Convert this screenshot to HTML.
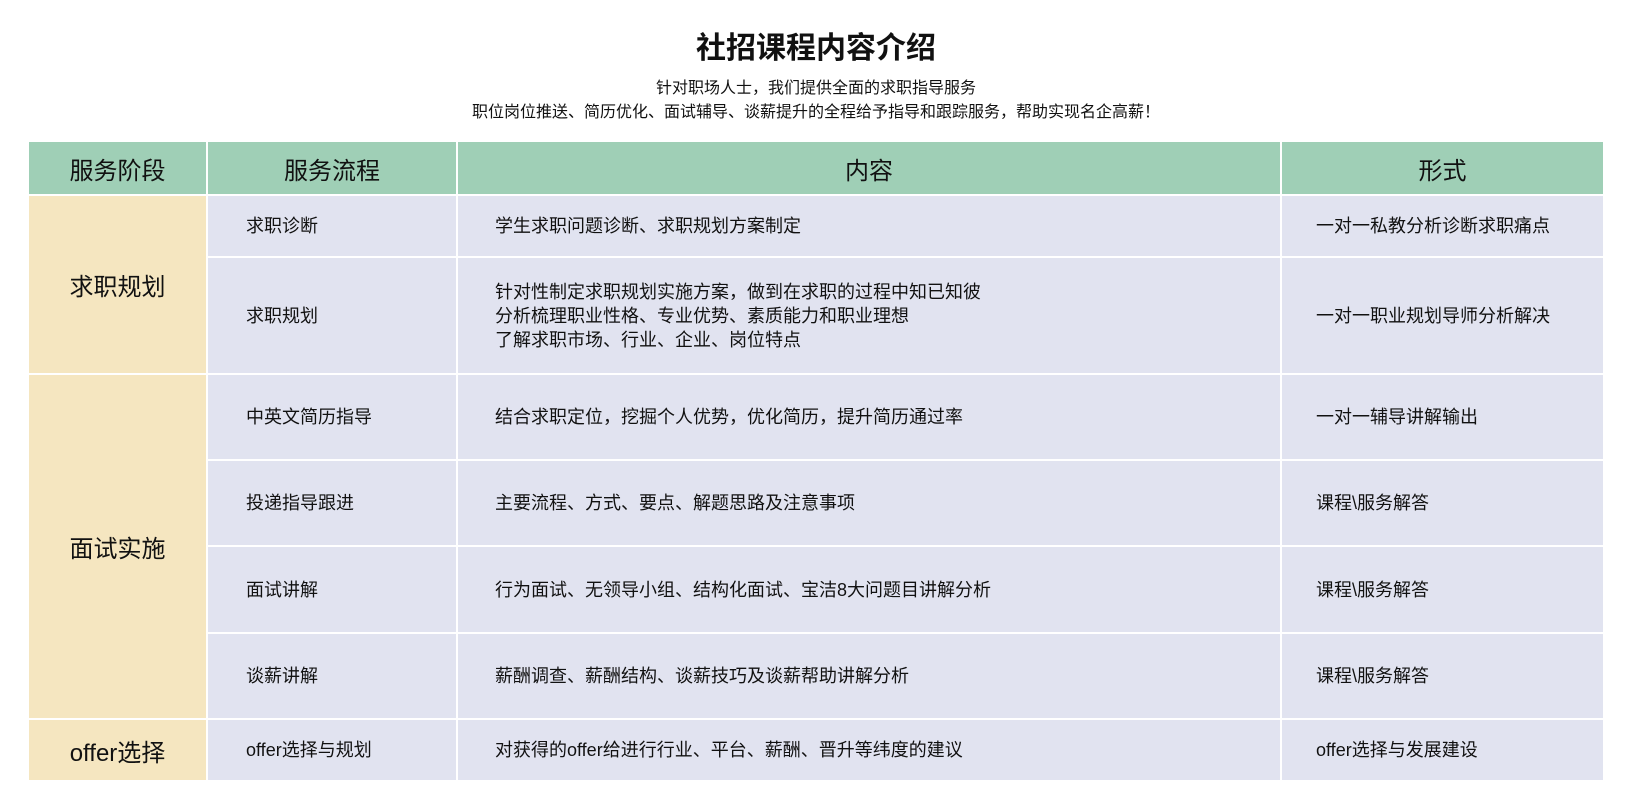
<!DOCTYPE html>
<html><head><meta charset="utf-8"><style>
body{margin:0;width:1632px;height:805px;background:#fff;position:relative;font-family:"Liberation Sans","Noto Sans CJK SC",sans-serif;color:#111;overflow:hidden}
.a{position:absolute;display:flex;align-items:center;box-sizing:border-box}
.h{background:#9fcfb6;justify-content:center;font-size:24px}
.s{background:#f5e6c0;justify-content:center;font-size:24px}
.c{background:#e1e3f0;font-size:18px;line-height:24px}
.t{position:absolute;left:0;width:1632px;text-align:center}
</style></head><body>
<div class="t" style="top:23px;font-size:30px;font-weight:bold">社招课程内容介绍</div>
<div class="t" style="top:74px;font-size:16px">针对职场人士，我们提供全面的求职指导服务</div>
<div class="t" style="top:98px;font-size:16px">职位岗位推送、简历优化、面试辅导、谈薪提升的全程给予指导和跟踪服务，帮助实现名企高薪！</div>

<div class="a h" style="left:29px;top:142px;width:177px;height:52px">服务阶段</div>
<div class="a h" style="left:208px;top:142px;width:248px;height:52px">服务流程</div>
<div class="a h" style="left:458px;top:142px;width:822px;height:52px">内容</div>
<div class="a h" style="left:1282px;top:142px;width:321px;height:52px">形式</div>

<div class="a s" style="left:29px;top:196px;width:177px;height:177px">求职规划</div>
<div class="a s" style="left:29px;top:375px;width:177px;height:343px">面试实施</div>
<div class="a s" style="left:29px;top:720px;width:177px;height:60px">offer选择</div>

<div class="a c" style="left:208px;top:196px;width:248px;height:60px;padding-left:38px">求职诊断</div>
<div class="a c" style="left:458px;top:196px;width:822px;height:60px;padding-left:37px">学生求职问题诊断、求职规划方案制定</div>
<div class="a c" style="left:1282px;top:196px;width:321px;height:60px;padding-left:34px">一对一私教分析诊断求职痛点</div>

<div class="a c" style="left:208px;top:258px;width:248px;height:115px;padding-left:38px">求职规划</div>
<div class="a c" style="left:458px;top:258px;width:822px;height:115px;padding-left:37px">针对性制定求职规划实施方案，做到在求职的过程中知已知彼<br>分析梳理职业性格、专业优势、素质能力和职业理想<br>了解求职市场、行业、企业、岗位特点</div>
<div class="a c" style="left:1282px;top:258px;width:321px;height:115px;padding-left:34px">一对一职业规划导师分析解决</div>

<div class="a c" style="left:208px;top:375px;width:248px;height:84px;padding-left:38px">中英文简历指导</div>
<div class="a c" style="left:458px;top:375px;width:822px;height:84px;padding-left:37px">结合求职定位，挖掘个人优势，优化简历，提升简历通过率</div>
<div class="a c" style="left:1282px;top:375px;width:321px;height:84px;padding-left:34px">一对一辅导讲解输出</div>

<div class="a c" style="left:208px;top:461px;width:248px;height:84px;padding-left:38px">投递指导跟进</div>
<div class="a c" style="left:458px;top:461px;width:822px;height:84px;padding-left:37px">主要流程、方式、要点、解题思路及注意事项</div>
<div class="a c" style="left:1282px;top:461px;width:321px;height:84px;padding-left:34px">课程\服务解答</div>

<div class="a c" style="left:208px;top:547px;width:248px;height:85px;padding-left:38px">面试讲解</div>
<div class="a c" style="left:458px;top:547px;width:822px;height:85px;padding-left:37px">行为面试、无领导小组、结构化面试、宝洁8大问题目讲解分析</div>
<div class="a c" style="left:1282px;top:547px;width:321px;height:85px;padding-left:34px">课程\服务解答</div>

<div class="a c" style="left:208px;top:634px;width:248px;height:84px;padding-left:38px">谈薪讲解</div>
<div class="a c" style="left:458px;top:634px;width:822px;height:84px;padding-left:37px">薪酬调查、薪酬结构、谈薪技巧及谈薪帮助讲解分析</div>
<div class="a c" style="left:1282px;top:634px;width:321px;height:84px;padding-left:34px">课程\服务解答</div>

<div class="a c" style="left:208px;top:720px;width:248px;height:60px;padding-left:38px">offer选择与规划</div>
<div class="a c" style="left:458px;top:720px;width:822px;height:60px;padding-left:37px">对获得的offer给进行行业、平台、薪酬、晋升等纬度的建议</div>
<div class="a c" style="left:1282px;top:720px;width:321px;height:60px;padding-left:34px">offer选择与发展建设</div>
</body></html>
